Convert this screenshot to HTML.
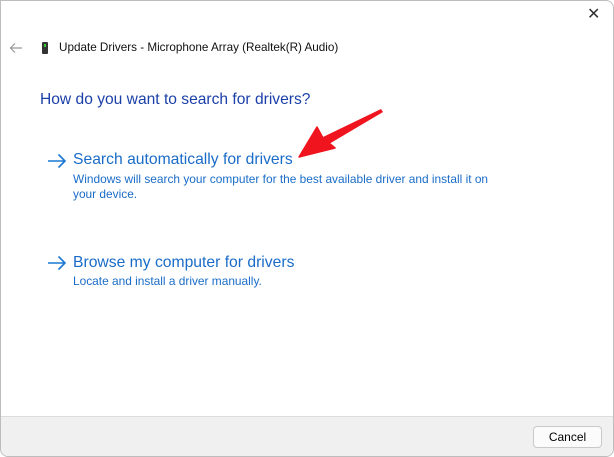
<!DOCTYPE html>
<html><head><style>
body{margin:0;width:614px;height:457px;background:#fff;position:relative;overflow:hidden;font-family:"Liberation Sans",sans-serif}
.win{position:absolute;left:0;top:0;width:612px;height:455px;border:1px solid #bdbdbd;border-radius:0 8px 8px 8px;background:#fff;overflow:hidden}
.foot{position:absolute;left:0;right:0;top:415px;bottom:0;background:#f0f0f0;border-top:1px solid #dcdcdc}
.btn{position:absolute;left:532px;top:9px;width:67px;height:20px;border:1px solid #c9c9c9;border-radius:4px;background:#fbfbfb;font-size:12px;text-align:center;line-height:20px;color:#000}
.t{position:absolute;white-space:nowrap}
</style></head><body>
<div class="win">
<div class="t" style="left:586px;top:3px;font-size:16px;color:#333">✕</div>
<svg class="t" style="left:8px;top:41px" width="14" height="12"><path d="M13 6H2M6 1.5L1.5 6L6 10.5" stroke="#999" stroke-width="1.2" fill="none"/></svg>
<div class="t" style="left:41px;top:41px;width:6px;height:12px;background:#333;border-radius:1px"><div style="position:absolute;left:2px;top:2px;width:2px;height:3px;background:#3c3"></div></div>
<div class="t" style="left:58px;top:40px;font-size:11.7px;color:#111">Update Drivers - Microphone Array (Realtek(R) Audio)</div>
<div class="t" style="left:39px;top:90px;font-size:15.6px;color:#1a3fa8">How do you want to search for drivers?</div>
<svg class="t" style="left:45px;top:152px" width="22" height="16"><path d="M2 8H19M12.5 1.5L19 8L12.5 14.5" stroke="#1a78d4" stroke-width="1.6" fill="none"/></svg>
<div class="t" style="left:72px;top:150px;font-size:15.7px;color:#1a6cc8">Search automatically for drivers</div>
<div class="t" style="left:72px;top:171px;font-size:11.9px;color:#1a6cc8;line-height:15px">Windows will search your computer for the best available driver and install it on<br>your device.</div>
<svg class="t" style="left:45px;top:254px" width="22" height="16"><path d="M2 8H19M12.5 1.5L19 8L12.5 14.5" stroke="#1a78d4" stroke-width="1.6" fill="none"/></svg>
<div class="t" style="left:72px;top:253px;font-size:15.7px;color:#1a6cc8">Browse my computer for drivers</div>
<div class="t" style="left:72px;top:273px;font-size:11.9px;color:#1a6cc8">Locate and install a driver manually.</div>
<svg class="t" style="left:0;top:0" width="614" height="200"><path d="M380 108L382 111L328 143L322 136Z" fill="#f0141e"/><path d="M298 156L316 126L322 137L334 147Z" fill="#f0141e" stroke="#f0141e" stroke-width="1.5" stroke-linejoin="round"/></svg>
<div class="foot"><div class="btn">Cancel</div></div>
</div>
</body></html>
